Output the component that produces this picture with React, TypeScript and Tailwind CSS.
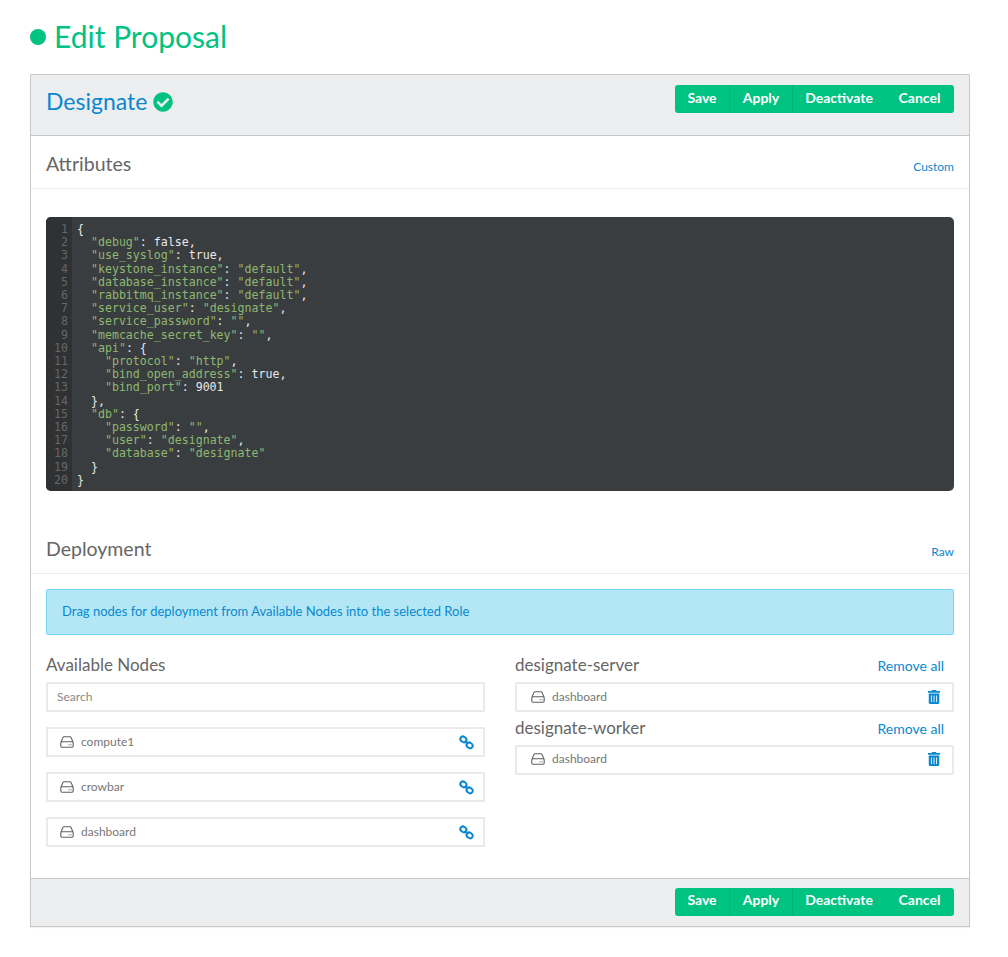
import { FaCheckCircle, FaTrashAlt } from 'react-icons/fa';

const CODE_LINES: [number, string][] = [
  [0, '{'],
  [1, '"debug": false,'],
  [1, '"use_syslog": true,'],
  [1, '"keystone_instance": "default",'],
  [1, '"database_instance": "default",'],
  [1, '"rabbitmq_instance": "default",'],
  [1, '"service_user": "designate",'],
  [1, '"service_password": "",'],
  [1, '"memcache_secret_key": "",'],
  [1, '"api": {'],
  [2, '"protocol": "http",'],
  [2, '"bind_open_address": true,'],
  [2, '"bind_port": 9001'],
  [1, '},'],
  [1, '"db": {'],
  [2, '"password": "",'],
  [2, '"user": "designate",'],
  [2, '"database": "designate"'],
  [1, '}'],
  [0, '}'],
];

// splits a json line into coloured tokens, strings green and the rest light
function CodeLine({ text }: { text: string }) {
  const parts = text.split(/("[^"]*")/g);
  return (
    <>
      {parts.map((part, i) =>
        part.startsWith('"') ? (
          <span key={i} className="text-[#8fb86f]">
            {part}
          </span>
        ) : (
          <span key={i}>{part}</span>
        ),
      )}
    </>
  );
}

function DiskIcon() {
  return (
    <svg width="14" height="12" viewBox="0 0 14 12" fill="none" stroke="#5f5f5f" strokeWidth="1.1" className="shrink-0">
      <path d="M1 6 L3 1.4 Q3.3 0.8 4 0.8 H10 Q10.7 0.8 11 1.4 L13 6" />
      <rect x="0.8" y="5.8" width="12.4" height="5.4" rx="1.2" />
      <path d="M8.6 8.8 H9.6 M10.6 8.8 H11.6" strokeWidth="1" />
    </svg>
  );
}

function LinkIcon() {
  return (
    <svg width="15" height="15" viewBox="0 0 15 15" fill="none" stroke="#0a87d0" strokeWidth="2" className="shrink-0">
      <ellipse cx="4.4" cy="4.4" rx="3.2" ry="2.6" transform="rotate(35 4.4 4.4)" />
      <ellipse cx="10.6" cy="10.4" rx="3.2" ry="2.6" transform="rotate(35 10.6 10.4)" />
      <path d="M5.8 5.8 L9 9" />
    </svg>
  );
}

function ButtonGroup() {
  return (
    <div className="flex h-[28px] rounded-[3px] bg-[#00c281] text-[14px] font-bold text-white">
      <button className="w-[55px] border-r border-[#00b377] pb-[4px]">Save</button>
      <button className="w-[63px] border-r border-[#00b377] pb-[4px]">Apply</button>
      <button className="w-[92px] pb-[4px]">Deactivate</button>
      <button className="w-[69px] pb-[4px]">Cancel</button>
    </div>
  );
}

function SectionHeader({ title, action }: { title: string; action: string }) {
  return (
    <div className="flex h-[53px] items-center justify-between border-b border-[#ededed] px-[15px] pt-[4px]">
      <h2 className="text-[19.5px] text-[#666]">{title}</h2>
      <a className="mt-[5px] text-[12px] text-[#0a87d0]">{action}</a>
    </div>
  );
}

function NodeRow({ name, action, nudge }: { name: string; action: 'link' | 'trash'; nudge?: boolean }) {
  return (
    <div
      className={`flex h-[30px] items-center border-2 border-[#eaeaea] bg-white text-[12px] text-[#777] ${
        action === 'trash' ? 'rounded-[2px] pl-[14px] pr-[10px]' : 'pl-[12px] pr-[9px]'
      } ${nudge ? 'pb-[2px]' : ''}`}
    >
      <DiskIcon />
      <span className="ml-[7px] flex-1">{name}</span>
      {action === 'link' ? <LinkIcon /> : <FaTrashAlt className="mr-[1px] text-[14px] text-[#0a87d0]" />}
    </div>
  );
}

function RoleHeader({ name }: { name: string }) {
  return (
    <div className="flex h-[25px] items-center justify-between pr-[10px]">
      <h3 className="text-[17px] text-[#666]">{name}</h3>
      <a className="mt-[1px] text-[14px] text-[#0a87d0]">Remove all</a>
    </div>
  );
}

export default function App() {
  return (
    <div className="min-h-[957px] bg-white pl-[30px] pr-[38px] pt-[14px] font-['Lato','Open_Sans',sans-serif]">
      <div className="flex h-[44px] items-center">
        <span className="mt-[2px] h-[16px] w-[16px] rounded-full bg-[#00c281]" />
        <h1 className="ml-[8px] text-[30px] leading-none text-[#00c281]">Edit Proposal</h1>
      </div>

      <div className="mt-[16px] border border-[#c8c8c8] shadow-[0_1px_1px_rgba(0,0,0,0.05)]">
        <div className="flex h-[61px] items-center justify-between border-b border-[#c8c8c8] bg-[#edeef0] px-[15px] pb-[12px]">
          <div className="flex items-center gap-[6px] pt-[4px]">
            <span className="text-[23px] text-[#0a87d0]">Designate</span>
            <FaCheckCircle className="mt-[2px] text-[20px] text-[#00c281]" />
          </div>
          <ButtonGroup />
        </div>

        <SectionHeader title="Attributes" action="Custom" />

        <div className="px-[15px] pt-[28px]">
          <div className="flex h-[274px] overflow-hidden rounded-[5px] bg-[#3a3d40] pt-[6px] font-['DejaVu_Sans_Mono',monospace] text-[11.6px] leading-[13.2px] text-[#e8e8e8]">
            <div className="-mt-[6px] w-[26px] shrink-0 bg-[#2f3133] pr-[4px] pt-[6px] text-right text-[#65686b]">
              {CODE_LINES.map((_, i) => (
                <div key={i}>{i + 1}</div>
              ))}
            </div>
            <div className="pl-[5px]">
              {CODE_LINES.map(([indent, text], i) => (
                <div key={i} className="whitespace-pre">
                  {'  '.repeat(indent)}
                  <CodeLine text={text} />
                </div>
              ))}
            </div>
          </div>
        </div>

        <div className="mt-[30px]">
          <SectionHeader title="Deployment" action="Raw" />
        </div>

        <div className="px-[15px] pt-[15px]">
          <div className="flex h-[46px] items-center rounded-[2px] border border-[#7cd5f0] bg-[#b3e7f6] px-[15px] text-[13px] text-[#0a87d0]">
            Drag nodes for deployment from Available Nodes into the selected Role
          </div>

          <div className="mt-[17px] grid h-[226px] grid-cols-2 gap-[30px]">
            <div>
              <h3 className="flex h-[25px] items-center text-[17px] text-[#666]">Available Nodes</h3>
              <div className="mt-[5px] flex h-[30px] items-center border-2 border-[#eaeaea] pl-[9px] text-[12px] text-[#888]">Search</div>
              <div className="mt-[15px] flex flex-col gap-[15px]">
                <NodeRow name="compute1" action="link" />
                <NodeRow name="crowbar" action="link" />
                <NodeRow name="dashboard" action="link" />
              </div>
            </div>
            <div>
              <RoleHeader name="designate-server" />
              <div className="mt-[5px]">
                <NodeRow name="dashboard" action="trash" />
              </div>
              <div className="mt-[3px]">
                <RoleHeader name="designate-worker" />
              </div>
              <div className="mt-[5px]">
                <NodeRow name="dashboard" action="trash" nudge />
              </div>
            </div>
          </div>
        </div>

        <div className="flex h-[48px] items-center justify-end border-t border-[#c8c8c8] bg-[#edeef0] px-[15px] pb-[2px]">
          <ButtonGroup />
        </div>
      </div>
    </div>
  );
}
